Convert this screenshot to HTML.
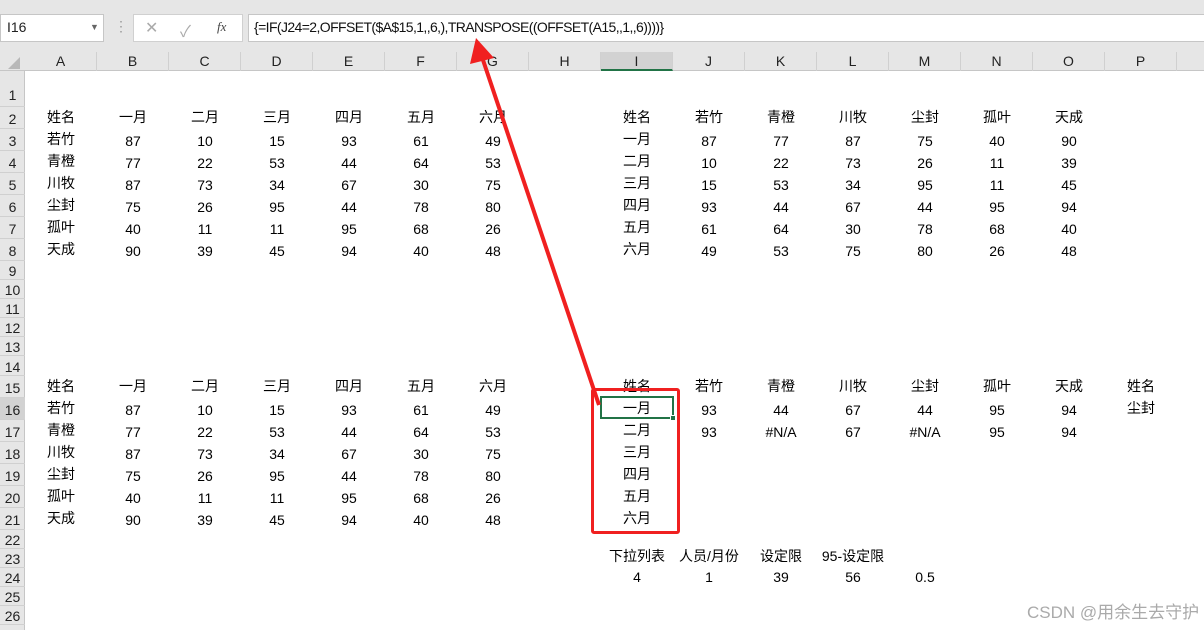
<!DOCTYPE html>
<html><head><meta charset="utf-8"><style>
*{margin:0;padding:0;box-sizing:border-box}
body{width:1204px;height:630px;overflow:hidden;background:#fff;position:relative;font-family:"Liberation Sans","Noto Sans CJK SC",sans-serif;font-size:14px;color:#000}
.a{position:absolute}
.top{left:0;top:0;width:1204px;height:52px;background:#e6e6e6}
.colh{left:0;top:52px;width:1204px;height:19px;background:#e6e6e6;border-bottom:1px solid #c6c6c6}
.ch{position:absolute;top:0;height:19px;width:72px;text-align:center;line-height:19px;font-size:14px;color:#222;border-right:1px solid #d0d0d0}
.rowh{left:0;top:71px;width:25px;height:559px;background:#e6e6e6;border-right:1px solid #c6c6c6}
.rh{position:absolute;left:0;width:25px;text-align:center;font-size:14px;color:#222;border-bottom:1px solid #d0d0d0}
.r{position:absolute;left:25px;width:1179px}
.r span{position:absolute;width:72px;text-align:center;bottom:2px}
</style></head><body>
<div class="a top"></div>
<div class="a" style="left:0;top:14px;width:104px;height:28px;background:#fff;border:1px solid #c6c6c6"></div>
<div class="a" style="left:7px;top:19px;font-size:14px;color:#222">I16</div>
<div class="a" style="left:90px;top:22px;font-size:9px;color:#666">▼</div>
<div class="a" style="left:114px;top:18px;color:#999;font-size:14px">⋮</div>
<div class="a" style="left:133px;top:14px;width:110px;height:28px;background:#fff;border:1px solid #d0d0d0"></div>
<div class="a" style="left:145px;top:18px;color:#aaa;font-size:16px">✕</div>
<div class="a" style="left:180px;top:18px;color:#aaa;font-size:16px">✓</div>
<div class="a" style="left:217px;top:19px;color:#444;font-size:13px;font-style:italic;font-family:'Liberation Serif',serif">fx</div>
<div class="a" style="left:248px;top:14px;width:960px;height:28px;background:#fff;border:1px solid #c6c6c6"></div>
<div class="a" style="left:254px;top:19px;font-size:14px;color:#111;letter-spacing:-0.6px">{=IF(J24=2,OFFSET($A$15,1,,6,),TRANSPOSE((OFFSET(A15,,1,,6))))}</div>
<div class="a colh">
<div class="a" style="left:8px;top:5px;width:0;height:0;border-left:12px solid transparent;border-bottom:12px solid #b8b8b8"></div>
<div class="ch" style="left:25px">A</div><div class="ch" style="left:97px">B</div><div class="ch" style="left:169px">C</div><div class="ch" style="left:241px">D</div><div class="ch" style="left:313px">E</div><div class="ch" style="left:385px">F</div><div class="ch" style="left:457px">G</div><div class="ch" style="left:529px">H</div><div class="ch" style="left:601px;background:#d2d2d2;border-bottom:2px solid #217346">I</div><div class="ch" style="left:673px">J</div><div class="ch" style="left:745px">K</div><div class="ch" style="left:817px">L</div><div class="ch" style="left:889px">M</div><div class="ch" style="left:961px">N</div><div class="ch" style="left:1033px">O</div><div class="ch" style="left:1105px">P</div><div class="ch" style="left:1177px"></div>
</div>
<div class="a rowh">
<div class="rh" style="top:0;height:36px;line-height:48px">1</div>
<div class="rh" style="top:36px;height:22px;line-height:24px">2</div>
<div class="rh" style="top:58px;height:22px;line-height:24px">3</div>
<div class="rh" style="top:80px;height:22px;line-height:24px">4</div>
<div class="rh" style="top:102px;height:22px;line-height:24px">5</div>
<div class="rh" style="top:124px;height:22px;line-height:24px">6</div>
<div class="rh" style="top:146px;height:22px;line-height:24px">7</div>
<div class="rh" style="top:168px;height:22px;line-height:24px">8</div>
<div class="rh" style="top:190px;height:19px;line-height:20px">9</div>
<div class="rh" style="top:209px;height:19px;line-height:20px">10</div>
<div class="rh" style="top:228px;height:19px;line-height:20px">11</div>
<div class="rh" style="top:247px;height:19px;line-height:20px">12</div>
<div class="rh" style="top:266px;height:19px;line-height:20px">13</div>
<div class="rh" style="top:285px;height:20px;line-height:22px">14</div>
<div class="rh" style="top:305px;height:22px;line-height:24px">15</div>
<div class="rh" style="top:327px;height:22px;line-height:24px;background:#d2d2d2">16</div>
<div class="rh" style="top:349px;height:22px;line-height:24px">17</div>
<div class="rh" style="top:371px;height:22px;line-height:24px">18</div>
<div class="rh" style="top:393px;height:22px;line-height:24px">19</div>
<div class="rh" style="top:415px;height:22px;line-height:24px">20</div>
<div class="rh" style="top:437px;height:22px;line-height:24px">21</div>
<div class="rh" style="top:459px;height:19px;line-height:20px">22</div>
<div class="rh" style="top:478px;height:19px;line-height:20px">23</div>
<div class="rh" style="top:497px;height:19px;line-height:20px">24</div>
<div class="rh" style="top:516px;height:19px;line-height:20px">25</div>
<div class="rh" style="top:535px;height:19px;line-height:20px">26</div>
</div>

<div class="r" style="top:107px;height:22px"><span style="left:0">姓名</span><span style="left:72px">一月</span><span style="left:144px">二月</span><span style="left:216px">三月</span><span style="left:288px">四月</span><span style="left:360px">五月</span><span style="left:432px">六月</span><span style="left:576px">姓名</span><span style="left:648px">若竹</span><span style="left:720px">青橙</span><span style="left:792px">川牧</span><span style="left:864px">尘封</span><span style="left:936px">孤叶</span><span style="left:1008px">天成</span></div>
<div class="r" style="top:129px;height:22px"><span style="left:0">若竹</span><span style="left:72px">87</span><span style="left:144px">10</span><span style="left:216px">15</span><span style="left:288px">93</span><span style="left:360px">61</span><span style="left:432px">49</span><span style="left:576px">一月</span><span style="left:648px">87</span><span style="left:720px">77</span><span style="left:792px">87</span><span style="left:864px">75</span><span style="left:936px">40</span><span style="left:1008px">90</span></div>
<div class="r" style="top:151px;height:22px"><span style="left:0">青橙</span><span style="left:72px">77</span><span style="left:144px">22</span><span style="left:216px">53</span><span style="left:288px">44</span><span style="left:360px">64</span><span style="left:432px">53</span><span style="left:576px">二月</span><span style="left:648px">10</span><span style="left:720px">22</span><span style="left:792px">73</span><span style="left:864px">26</span><span style="left:936px">11</span><span style="left:1008px">39</span></div>
<div class="r" style="top:173px;height:22px"><span style="left:0">川牧</span><span style="left:72px">87</span><span style="left:144px">73</span><span style="left:216px">34</span><span style="left:288px">67</span><span style="left:360px">30</span><span style="left:432px">75</span><span style="left:576px">三月</span><span style="left:648px">15</span><span style="left:720px">53</span><span style="left:792px">34</span><span style="left:864px">95</span><span style="left:936px">11</span><span style="left:1008px">45</span></div>
<div class="r" style="top:195px;height:22px"><span style="left:0">尘封</span><span style="left:72px">75</span><span style="left:144px">26</span><span style="left:216px">95</span><span style="left:288px">44</span><span style="left:360px">78</span><span style="left:432px">80</span><span style="left:576px">四月</span><span style="left:648px">93</span><span style="left:720px">44</span><span style="left:792px">67</span><span style="left:864px">44</span><span style="left:936px">95</span><span style="left:1008px">94</span></div>
<div class="r" style="top:217px;height:22px"><span style="left:0">孤叶</span><span style="left:72px">40</span><span style="left:144px">11</span><span style="left:216px">11</span><span style="left:288px">95</span><span style="left:360px">68</span><span style="left:432px">26</span><span style="left:576px">五月</span><span style="left:648px">61</span><span style="left:720px">64</span><span style="left:792px">30</span><span style="left:864px">78</span><span style="left:936px">68</span><span style="left:1008px">40</span></div>
<div class="r" style="top:239px;height:22px"><span style="left:0">天成</span><span style="left:72px">90</span><span style="left:144px">39</span><span style="left:216px">45</span><span style="left:288px">94</span><span style="left:360px">40</span><span style="left:432px">48</span><span style="left:576px">六月</span><span style="left:648px">49</span><span style="left:720px">53</span><span style="left:792px">75</span><span style="left:864px">80</span><span style="left:936px">26</span><span style="left:1008px">48</span></div>

<div class="r" style="top:376px;height:22px"><span style="left:0">姓名</span><span style="left:72px">一月</span><span style="left:144px">二月</span><span style="left:216px">三月</span><span style="left:288px">四月</span><span style="left:360px">五月</span><span style="left:432px">六月</span><span style="left:576px">姓名</span><span style="left:648px">若竹</span><span style="left:720px">青橙</span><span style="left:792px">川牧</span><span style="left:864px">尘封</span><span style="left:936px">孤叶</span><span style="left:1008px">天成</span><span style="left:1080px">姓名</span></div>
<div class="r" style="top:398px;height:22px"><span style="left:0">若竹</span><span style="left:72px">87</span><span style="left:144px">10</span><span style="left:216px">15</span><span style="left:288px">93</span><span style="left:360px">61</span><span style="left:432px">49</span><span style="left:576px">一月</span><span style="left:648px">93</span><span style="left:720px">44</span><span style="left:792px">67</span><span style="left:864px">44</span><span style="left:936px">95</span><span style="left:1008px">94</span><span style="left:1080px">尘封</span></div>
<div class="r" style="top:420px;height:22px"><span style="left:0">青橙</span><span style="left:72px">77</span><span style="left:144px">22</span><span style="left:216px">53</span><span style="left:288px">44</span><span style="left:360px">64</span><span style="left:432px">53</span><span style="left:576px">二月</span><span style="left:648px">93</span><span style="left:720px">#N/A</span><span style="left:792px">67</span><span style="left:864px">#N/A</span><span style="left:936px">95</span><span style="left:1008px">94</span></div>
<div class="r" style="top:442px;height:22px"><span style="left:0">川牧</span><span style="left:72px">87</span><span style="left:144px">73</span><span style="left:216px">34</span><span style="left:288px">67</span><span style="left:360px">30</span><span style="left:432px">75</span><span style="left:576px">三月</span></div>
<div class="r" style="top:464px;height:22px"><span style="left:0">尘封</span><span style="left:72px">75</span><span style="left:144px">26</span><span style="left:216px">95</span><span style="left:288px">44</span><span style="left:360px">78</span><span style="left:432px">80</span><span style="left:576px">四月</span></div>
<div class="r" style="top:486px;height:22px"><span style="left:0">孤叶</span><span style="left:72px">40</span><span style="left:144px">11</span><span style="left:216px">11</span><span style="left:288px">95</span><span style="left:360px">68</span><span style="left:432px">26</span><span style="left:576px">五月</span></div>
<div class="r" style="top:508px;height:22px"><span style="left:0">天成</span><span style="left:72px">90</span><span style="left:144px">39</span><span style="left:216px">45</span><span style="left:288px">94</span><span style="left:360px">40</span><span style="left:432px">48</span><span style="left:576px">六月</span></div>

<div class="r" style="top:549px;height:19px"><span style="left:576px;white-space:nowrap">下拉列表</span><span style="left:648px;white-space:nowrap">人员/月份</span><span style="left:720px">设定限</span><span style="left:792px;white-space:nowrap">95-设定限</span></div>
<div class="r" style="top:568px;height:19px"><span style="left:576px">4</span><span style="left:648px">1</span><span style="left:720px">39</span><span style="left:792px">56</span><span style="left:864px">0.5</span></div>

<div class="a" style="left:600px;top:396px;width:74px;height:23px;border:2px solid #217346"></div>
<div class="a" style="left:670px;top:415px;width:6px;height:6px;background:#217346;border:1px solid #fff"></div>
<div class="a" style="left:591px;top:388px;width:89px;height:146px;border:3px solid #f02020;border-radius:3px"></div>
<svg class="a" style="left:0;top:0" width="1204" height="630"><line x1="599" y1="405" x2="483" y2="60" stroke="#f02020" stroke-width="4"/><polygon points="476,38 470,64 494,58" fill="#f02020"/></svg>
<div class="a" style="left:1027px;top:598px;font-size:17px;color:#aaa">CSDN @用余生去守护</div>
</body></html>
